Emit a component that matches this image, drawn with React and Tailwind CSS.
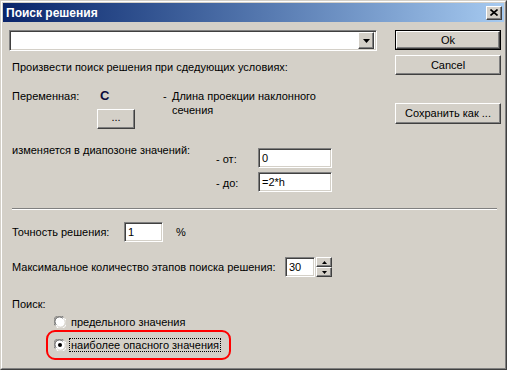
import React from "react";

const font = { fontFamily: '"Liberation Sans", Arial, sans-serif' };

function Raised({ className = "", children }) {
  return (
    <div
      className={
        "flex items-center justify-center bg-[#d4d0c8] border border-t-white border-l-white border-b-[#404040] border-r-[#404040] shadow-[inset_-1px_-1px_0_#808080,inset_1px_1px_0_#d4d0c8] " +
        className
      }
    >
      {children}
    </div>
  );
}

function Sunken({ className = "", children }) {
  return (
    <div
      className={
        "flex items-center bg-white border border-t-[#808080] border-l-[#808080] border-b-white border-r-white shadow-[inset_1px_1px_0_#404040,inset_-1px_-1px_0_#d4d0c8] " +
        className
      }
    >
      {children}
    </div>
  );
}

function Radio({ checked }) {
  return (
    <div className="relative w-[12px] h-[12px] shrink-0">
      <svg width="12" height="12" viewBox="0 0 12 12" className="absolute inset-0">
        <circle cx="6" cy="6" r="5.5" fill="#ffffff" />
        <path d="M1.2 9.5 A5.5 5.5 0 0 1 9.5 1.2" stroke="#808080" strokeWidth="1" fill="none" />
        <path d="M2.2 8.8 A4.5 4.5 0 0 1 8.8 2.2" stroke="#404040" strokeWidth="1" fill="none" />
        <path d="M10.8 2.5 A5.5 5.5 0 0 1 2.5 10.8" stroke="#ffffff" strokeWidth="1" fill="none" />
        <path d="M9.8 3.2 A4.5 4.5 0 0 1 3.2 9.8" stroke="#d4d0c8" strokeWidth="1" fill="none" />
        {checked && <circle cx="6" cy="6" r="2" fill="#000" />}
      </svg>
    </div>
  );
}

export default function App() {
  return (
    <div
      className="w-[507px] h-[370px] border border-t-[#d4d0c8] border-l-[#d4d0c8] border-b-[#404040] border-r-[#404040] bg-[#d4d0c8] text-[11px] text-black"
      style={font}
    >
      <div className="w-full h-full border border-t-white border-l-white border-b-[#808080] border-r-[#808080] p-px flex flex-col">
        {/* Title bar */}
        <div className="h-[19px] flex items-center bg-linear-to-r from-[#0a246a] to-[#a6caf0] pl-[3px] pr-[2px]">
          <span className="text-white font-bold text-[12px] leading-none flex-1">Поиск решения</span>
          <Raised className="w-[16px] h-[14px]">
            <svg width="8" height="7" viewBox="0 0 8 7">
              <path d="M0.5 0.5 L7.5 6.5 M7.5 0.5 L0.5 6.5" stroke="#000" strokeWidth="1.6" />
            </svg>
          </Raised>
        </div>

        {/* Body */}
        <div className="flex flex-col pt-[8px]">
          <div className="flex">
            {/* Left column */}
            <div className="w-[368px] ml-[6px] flex flex-col">
              <Sunken className="h-[21px] w-[368px] justify-end pr-[2px]">
                <Raised className="w-[16px] h-[17px]">
                  <svg width="7" height="4" viewBox="0 0 7 4">
                    <path d="M0 0 H7 L3.5 4 Z" fill="#000" />
                  </svg>
                </Raised>
              </Sunken>
              <div className="mt-[10px] pl-[3px] leading-[13px]">Произвести поиск решения при сдедующих условиях:</div>
              <div className="mt-[15px] flex">
                <div className="w-[88px] pl-[3px] leading-[14px]">Переменная:</div>
                <div className="w-[66px] flex flex-col">
                  <div className="pl-[3px] leading-[14px] font-bold text-[13px] text-[#0b0b3a]">C</div>
                  <Raised className="mt-[6px] w-[38px] h-[20px] pb-[4px]">...</Raised>
                </div>
                <div className="flex leading-[14px]">
                  <span className="w-[9px]">-</span>
                  <span>
                    Длина проекции наклонного
                    <br />
                    сечения
                  </span>
                </div>
              </div>
              <div className="mt-[15px] flex">
                <div className="w-[207px] pl-[3px] leading-[13px]">изменяется в диапозоне значений:</div>
                <div className="flex flex-col gap-[4px] pt-[4px]">
                  <div className="flex items-center">
                    <span className="w-[42px] pt-[3px]">- от:</span>
                    <Sunken className="w-[74px] h-[20px] pl-[3px]">0</Sunken>
                  </div>
                  <div className="flex items-center">
                    <span className="w-[42px] pt-[3px]">- до:</span>
                    <Sunken className="w-[74px] h-[20px] pl-[3px]">=2*h</Sunken>
                  </div>
                </div>
              </div>
            </div>
            {/* Right column */}
            <div className="ml-[18px] w-[106px] flex flex-col">
              <div className="border border-black">
                <Raised className="w-full h-[18px]">Ok</Raised>
              </div>
              <Raised className="mt-[5px] w-full h-[20px]">Cancel</Raised>
              <Raised className="mt-[28px] w-full h-[21px]">Сохранить как ...</Raised>
            </div>
          </div>

          {/* Separator */}
          <div className="mt-[16px] ml-[9px] w-[485px] h-[2px] border-t border-t-[#808080] border-b border-b-white" />

          {/* Bottom */}
          <div className="ml-[9px] flex flex-col">
            <div className="mt-[12px] flex items-center h-[20px]">
              <span className="w-[112px]">Точность решения:</span>
              <Sunken className="w-[39px] h-[20px] pl-[3px]">1</Sunken>
              <span className="ml-[13px]">%</span>
            </div>
            <div className="mt-[15px] flex items-center h-[20px]">
              <span className="w-[273px]">Максимальное количество этапов поиска решения:</span>
              <Sunken className="w-[30px] h-[20px] pl-[3px]">30</Sunken>
              <div className="flex flex-col ml-px">
                <Raised className="w-[16px] h-[10px]">
                  <svg width="5" height="3" viewBox="0 0 5 3"><path d="M2.5 0 L5 3 H0 Z" fill="#000" /></svg>
                </Raised>
                <Raised className="w-[16px] h-[10px]">
                  <svg width="5" height="3" viewBox="0 0 5 3"><path d="M0 0 H5 L2.5 3 Z" fill="#000" /></svg>
                </Raised>
              </div>
            </div>
            <div className="mt-[21px] leading-[13px]">Поиск:</div>
            <div className="mt-[4px] ml-[42px] flex items-center h-[14px] gap-[5px]">
              <Radio />
              <span>предельного значения</span>
            </div>
            <div className="mt-px ml-[34px] w-[185px] h-[30px] border-2 border-[#ff0000] rounded-[9px] flex items-center pl-[6px] gap-[3px]">
              <Radio checked />
              <span className="border border-dotted border-black px-px leading-[12px]">наиболее опасного значения</span>
            </div>
          </div>
        </div>
      </div>
    </div>
  );
}
